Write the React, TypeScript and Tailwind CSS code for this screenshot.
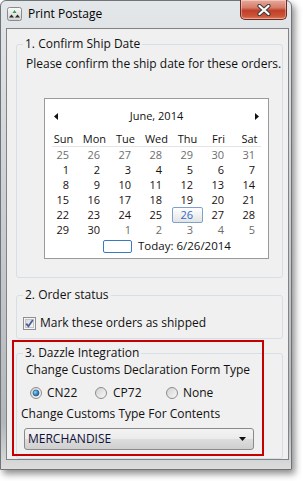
import React from "react";

const weeks: { d: number; muted?: boolean }[][] = [
  [25, 26, 27, 28, 29, 30, 31].map((d) => ({ d, muted: true })),
  [1, 2, 3, 4, 5, 6, 7].map((d) => ({ d })),
  [8, 9, 10, 11, 12, 13, 14].map((d) => ({ d })),
  [15, 16, 17, 18, 19, 20, 21].map((d) => ({ d })),
  [22, 23, 24, 25, 26, 27, 28].map((d) => ({ d })),
  [
    { d: 29 },
    { d: 30 },
    { d: 1, muted: true },
    { d: 2, muted: true },
    { d: 3, muted: true },
    { d: 4, muted: true },
    { d: 5, muted: true },
  ],
];

const dayNames = ["Sun", "Mon", "Tue", "Wed", "Thu", "Fri", "Sat"];

function TitleIcon() {
  return (
    <svg width="15" height="14" viewBox="0 0 15 14" className="shrink-0">
      <defs>
        <linearGradient id="ti" x1="0" y1="0" x2="0" y2="1">
          <stop offset="0" stopColor="#fafafa" />
          <stop offset="1" stopColor="#d2d2d2" />
        </linearGradient>
      </defs>
      <rect x="0.5" y="0.5" width="14" height="13" rx="2" fill="url(#ti)" stroke="#8a8a8a" />
      <path d="M7.5 3 L9.5 6 L5.5 6 Z" fill="#2fa043" />
      <path d="M4.5 7.5 L7 10.5 L2 10.5 Z" fill="#2b2b2b" />
      <path d="M10.5 7.5 L13 10.5 L8 10.5 Z" fill="#2b2b2b" />
    </svg>
  );
}

function CloseButton() {
  return (
    <div className="ml-auto mr-[4px] -mt-px w-[47px] h-[20px] rounded-b-[5px] border border-[#6b2a22] border-t-0 bg-[linear-gradient(180deg,#e8aa9c_0%,#d67c69_40%,#c0402a_55%,#cc5338_85%,#e0805f_100%)] flex items-center justify-center shadow-[inset_0_0_0_1px_rgba(255,255,255,0.35)]">
      <svg width="14" height="12" viewBox="0 0 14 12">
        <path d="M2.5 2 L11.5 10 M11.5 2 L2.5 10" stroke="#3a3a3a" strokeWidth="4.2" strokeLinecap="round" />
        <path d="M2.5 2 L11.5 10 M11.5 2 L2.5 10" stroke="#ffffff" strokeWidth="2.3" strokeLinecap="round" />
      </svg>
    </div>
  );
}

function Calendar() {
  return (
    <div className="ml-[27px] mt-[26px] w-[225px] border border-[#9b9b9b] bg-white px-[3px] pt-[9px] pb-[4px] text-[11px]">
      <div className="flex items-center justify-between h-[16px] px-[6px]">
        <svg width="4" height="7" viewBox="0 0 4 7">
          <path d="M4 0 L0 3.5 L4 7 Z" fill="#111" />
        </svg>
        <span className="leading-[16px]">June, 2014</span>
        <svg width="4" height="7" viewBox="0 0 4 7">
          <path d="M0 0 L4 3.5 L0 7 Z" fill="#111" />
        </svg>
      </div>
      <div className="mt-[8px] grid grid-cols-[repeat(7,31px)] leading-[14px] text-center">
        {dayNames.map((n) => (
          <span key={n}>{n}</span>
        ))}
      </div>
      <div className="mx-[4px] h-px bg-[#e4e4e4]" />
      {weeks.map((w, i) => (
        <div key={i} className="grid grid-cols-[repeat(7,31px)] leading-[15px] h-[15px]">
          {w.map((c, j) =>
            i === 4 && c.d === 26 ? (
              <span
                key={j}
                className="h-[16px] -mb-px text-right pr-[9px] border border-[#7da2ce] rounded-[2px] bg-[linear-gradient(180deg,#ffffff,#e4e4e4)] text-[#2f68c8] leading-[14px]"
              >
                {c.d}
              </span>
            ) : (
              <span key={j} className={"text-right pr-[10px] " + (c.muted ? "text-[#6d6d6d]" : "text-[#1a1010]")}>
                {c.d}
              </span>
            )
          )}
        </div>
      ))}
      <div className="mt-[1px] h-[16px] flex items-center pl-[55px]">
        <span className="w-[29px] h-[13px] border border-[#3c78c3] rounded-[2px]" />
        <span className="ml-[6px] leading-[16px] text-[11.5px]">Today: 6/26/2014</span>
      </div>
    </div>
  );
}

function Radio({ checked }: { checked?: boolean }) {
  return (
    <svg width="12" height="12" viewBox="0 0 12 12" className="shrink-0">
      <defs>
        <linearGradient id="rb" x1="0" y1="0" x2="1" y2="1">
          <stop offset="0" stopColor="#cfcfcf" />
          <stop offset="1" stopColor="#fbfbfb" />
        </linearGradient>
        <radialGradient id="rd" cx="0.35" cy="0.35" r="0.8">
          <stop offset="0" stopColor="#8fd2f5" />
          <stop offset="0.6" stopColor="#2a82c0" />
          <stop offset="1" stopColor="#14507f" />
        </radialGradient>
      </defs>
      <circle cx="6" cy="6" r="5.5" fill="url(#rb)" stroke="#8c8c8c" />
      {checked && <circle cx="6" cy="6" r="3" fill="url(#rd)" stroke="#1d4f78" strokeWidth="0.6" />}
    </svg>
  );
}

export default function App() {
  return (
    <div className="w-[303px] h-[481px] bg-white overflow-hidden font-['Open_Sans',sans-serif] text-[12px] text-[#111]">
      <div className="w-[292px] h-[470px] flex flex-col rounded-t-[6px] border border-[#6f7479] bg-[linear-gradient(180deg,#e4e7ea_0%,#d0d4d8_35%,#b3b7bb_90%,#dcdcdc_100%)] shadow-[3px_4px_7px_rgba(0,0,0,0.45)]">
        {/* title bar */}
        <div className="h-[27px] shrink-0 flex items-start">
          <div className="ml-[6px] mt-[6px]">
            <TitleIcon />
          </div>
          <span className="ml-[6px] mt-[5px] leading-[16px] text-black">Print Postage</span>
          <CloseButton />
        </div>

        {/* client area */}
        <div className="relative ml-[5px] mr-[2px] h-[432px] shrink-0 border border-[#838383] bg-[#f0f0f0] overflow-hidden">
          <fieldset className="ml-[9px] mt-[7px] w-[267px] border border-[#d5dfe5] rounded-[3px] p-0 pb-[18px]">
            <legend className="ml-[6px] px-[2px] leading-[16px]">1. Confirm Ship Date</legend>
            <p className="mt-[4px] pl-[9px] leading-[16px]">Please confirm the ship date for these orders.</p>
            <Calendar />
          </fieldset>

          <fieldset className="ml-[9px] mt-[9px] w-[267px] border border-[#d5dfe5] rounded-[3px] p-0 pb-[7px]">
            <legend className="ml-[6px] px-[2px] leading-[16px]">2. Order status</legend>
            <div className="mt-[12px] ml-[6px] h-[16px] flex items-center">
              <svg width="13" height="13" viewBox="0 0 13 13" className="shrink-0">
                <defs>
                  <linearGradient id="cb" x1="0" y1="0" x2="1" y2="1">
                    <stop offset="0" stopColor="#d8d8d8" />
                    <stop offset="1" stopColor="#f8f8f8" />
                  </linearGradient>
                </defs>
                <rect x="0.5" y="0.5" width="12" height="12" fill="#f4f4f4" stroke="#8e8f8f" />
                <rect x="2.5" y="2.5" width="8" height="8" fill="url(#cb)" stroke="#c4c4c4" />
                <path d="M3.2 6.6 L5.4 9.2 L9.8 3" stroke="#4a5f9e" strokeWidth="1.8" fill="none" />
              </svg>
              <span className="ml-[4px] leading-[16px]">Mark these orders as shipped</span>
            </div>
          </fieldset>

          <fieldset className="ml-[9px] mt-[6px] w-[267px] border border-[#d5dfe5] rounded-[3px] p-0 pb-[8px]">
            <legend className="ml-[6px] px-[2px] leading-[16px]">3. Dazzle Integration</legend>
            <p className="mt-[1px] pl-[9px] leading-[16px]">Change Customs Declaration Form Type</p>
            <div className="mt-[7px] ml-[13px] h-[16px] flex items-center">
              <label className="w-[65px] flex items-center">
                <Radio checked />
                <span className="ml-[5px]">CN22</span>
              </label>
              <label className="w-[71px] flex items-center">
                <Radio />
                <span className="ml-[6px]">CP72</span>
              </label>
              <label className="flex items-center">
                <Radio />
                <span className="ml-[5px]">None</span>
              </label>
            </div>
            <p className="mt-[5px] pl-[4px] leading-[16px]">Change Customs Type For Contents</p>
            <div className="mt-[6px] ml-[7px] w-[230px] h-[22px] flex items-center justify-between rounded-[3px] border border-[#8a8a8a] bg-[linear-gradient(180deg,#f3f3f3_0%,#ebebeb_50%,#dddddd_51%,#cfcfcf_100%)] pl-[3px] pr-[7px]">
              <span className="leading-[16px] text-[#10103a]">MERCHANDISE</span>
              <svg width="7" height="4" viewBox="0 0 7 4">
                <path d="M0 0 L7 0 L3.5 4 Z" fill="#111" />
              </svg>
            </div>
          </fieldset>

          {/* highlight annotation */}
          <div className="absolute left-[5px] top-[311px] w-[252px] h-[116px] border-2 border-[#c40000] pointer-events-none" />
        </div>
      </div>
    </div>
  );
}
